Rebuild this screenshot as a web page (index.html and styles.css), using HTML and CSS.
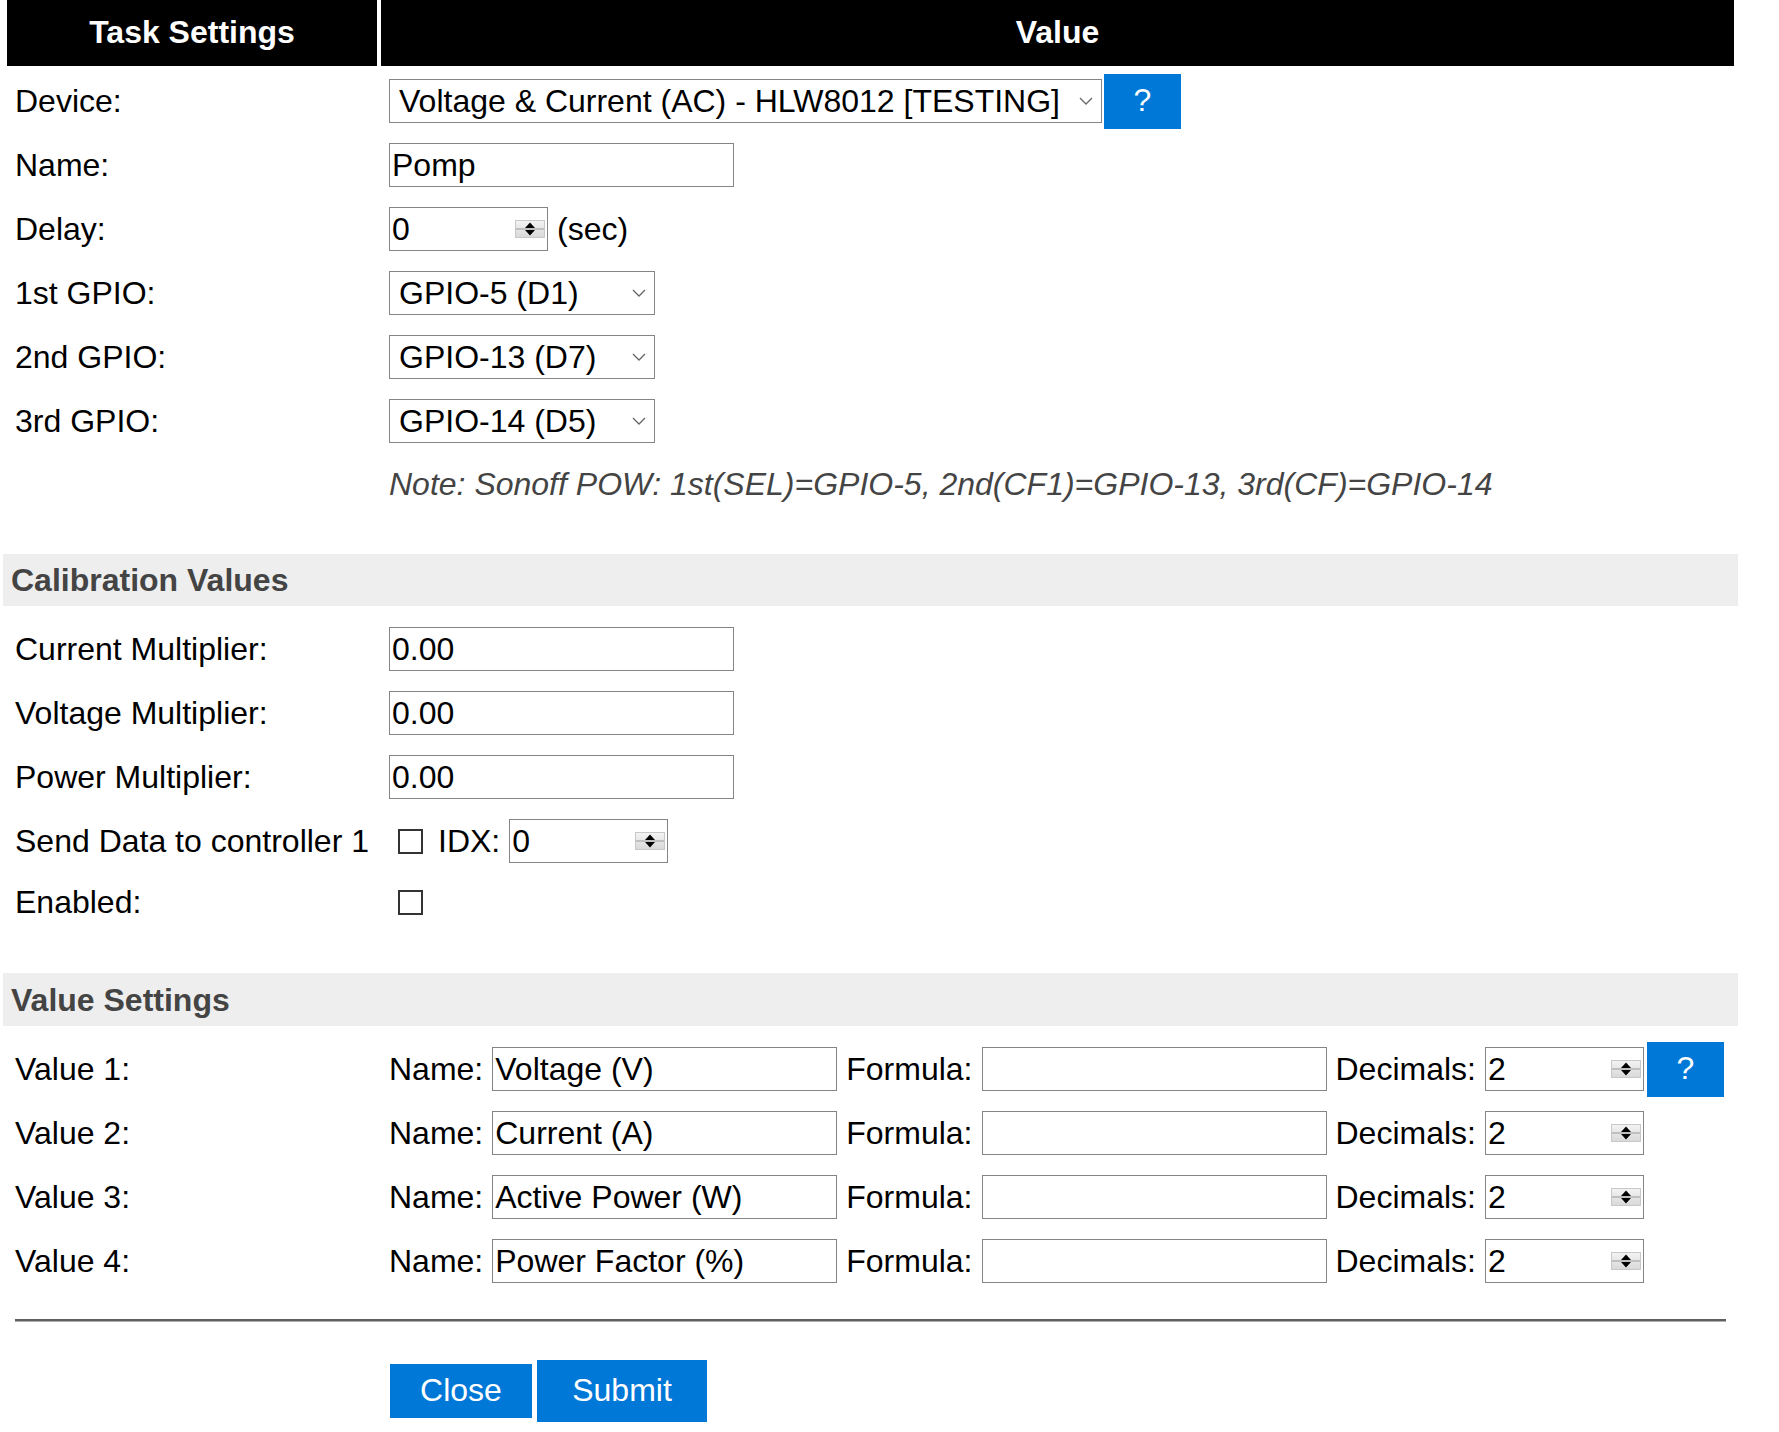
FILE: index.html
```html
<!DOCTYPE html>
<html lang="en">
<head>
<meta charset="utf-8">
<title>Task Settings</title>
<link rel="stylesheet" href="styles.css">
</head>
<body>
<form class="form">
  <div class="head">
    <div class="th">Task Settings</div>
    <div class="th">Value</div>
  </div>

  <div class="rows rows1">
    <div class="row">
      <div class="lbl">Device:</div>
      <div class="val gap2">
        <span class="sel w712"><select aria-label="Device"><option>Voltage &amp; Current (AC) - HLW8012 [TESTING]</option></select><svg class="chev" viewBox="0 0 14 8"><polyline points="1,1 7,7 13,1"/></svg></span>
        <button type="button" class="help">?</button>
      </div>
    </div>
    <div class="row">
      <div class="lbl">Name:</div>
      <div class="val"><input class="txt" value="Pomp" aria-label="Name"></div>
    </div>
    <div class="row">
      <div class="lbl">Delay:</div>
      <div class="val">
        <span class="num"><input value="0" aria-label="Delay"><svg class="spin" viewBox="0 0 30 18"><defs><linearGradient id="g" x1="0" y1="0" x2="0" y2="1"><stop offset="0" stop-color="#f4f4f4"/><stop offset="1" stop-color="#d8d8d8"/></linearGradient></defs><rect x="0.5" y="0.5" width="29" height="17" fill="url(#g)" stroke="#c8c8c8"/><line x1="1" y1="9" x2="29" y2="9" stroke="#999"/><polygon points="10,8 20,8 15,2.5"/><polygon points="10,10 20,10 15,15.5"/></svg></span>
        <span>(sec)</span>
      </div>
    </div>
    <div class="row">
      <div class="lbl">1st GPIO:</div>
      <div class="val"><span class="sel w266"><select aria-label="1st GPIO"><option>GPIO-5 (D1)</option></select><svg class="chev" viewBox="0 0 14 8"><polyline points="1,1 7,7 13,1"/></svg></span></div>
    </div>
    <div class="row">
      <div class="lbl">2nd GPIO:</div>
      <div class="val"><span class="sel w266"><select aria-label="2nd GPIO"><option>GPIO-13 (D7)</option></select><svg class="chev" viewBox="0 0 14 8"><polyline points="1,1 7,7 13,1"/></svg></span></div>
    </div>
    <div class="row">
      <div class="lbl">3rd GPIO:</div>
      <div class="val"><span class="sel w266"><select aria-label="3rd GPIO"><option>GPIO-14 (D5)</option></select><svg class="chev" viewBox="0 0 14 8"><polyline points="1,1 7,7 13,1"/></svg></span></div>
    </div>
    <div class="row">
      <div class="lbl"></div>
      <div class="val note">Note: Sonoff POW: 1st(SEL)=GPIO-5, 2nd(CF1)=GPIO-13, 3rd(CF)=GPIO-14</div>
    </div>
  </div>

  <h3 class="band band1">Calibration Values</h3>

  <div class="rows">
    <div class="row">
      <div class="lbl">Current Multiplier:</div>
      <div class="val"><input class="txt" value="0.00" aria-label="Current Multiplier"></div>
    </div>
    <div class="row">
      <div class="lbl">Voltage Multiplier:</div>
      <div class="val"><input class="txt" value="0.00" aria-label="Voltage Multiplier"></div>
    </div>
    <div class="row">
      <div class="lbl">Power Multiplier:</div>
      <div class="val"><input class="txt" value="0.00" aria-label="Power Multiplier"></div>
    </div>
    <div class="row">
      <div class="lbl">Send Data to controller 1</div>
      <div class="val">
        <input type="checkbox" class="chk" aria-label="Send Data to controller 1">
        <span>IDX:</span>
        <span class="num"><input value="0" aria-label="IDX"><svg class="spin" viewBox="0 0 30 18"><rect x="0.5" y="0.5" width="29" height="17" fill="url(#g)" stroke="#c8c8c8"/><line x1="1" y1="9" x2="29" y2="9" stroke="#999"/><polygon points="10,8 20,8 15,2.5"/><polygon points="10,10 20,10 15,15.5"/></svg></span>
      </div>
    </div>
    <div class="row row-short">
      <div class="lbl">Enabled:</div>
      <div class="val"><input type="checkbox" class="chk" aria-label="Enabled"></div>
    </div>
  </div>

  <h3 class="band band2">Value Settings</h3>

  <div class="rows">
    <div class="row">
      <div class="lbl">Value 1:</div>
      <div class="val">
        <span>Name:</span><input class="txt" value="Voltage (V)" aria-label="Value 1 name">
        <span>Formula:</span><input class="txt" value="" aria-label="Value 1 formula">
        <span>Decimals:</span>
        <span class="gap3">
          <span class="num"><input value="2" aria-label="Value 1 decimals"><svg class="spin" viewBox="0 0 30 18"><rect x="0.5" y="0.5" width="29" height="17" fill="url(#g)" stroke="#c8c8c8"/><line x1="1" y1="9" x2="29" y2="9" stroke="#999"/><polygon points="10,8 20,8 15,2.5"/><polygon points="10,10 20,10 15,15.5"/></svg></span>
          <button type="button" class="help">?</button>
        </span>
      </div>
    </div>
    <div class="row">
      <div class="lbl">Value 2:</div>
      <div class="val">
        <span>Name:</span><input class="txt" value="Current (A)" aria-label="Value 2 name">
        <span>Formula:</span><input class="txt" value="" aria-label="Value 2 formula">
        <span>Decimals:</span>
        <span class="num"><input value="2" aria-label="Value 2 decimals"><svg class="spin" viewBox="0 0 30 18"><rect x="0.5" y="0.5" width="29" height="17" fill="url(#g)" stroke="#c8c8c8"/><line x1="1" y1="9" x2="29" y2="9" stroke="#999"/><polygon points="10,8 20,8 15,2.5"/><polygon points="10,10 20,10 15,15.5"/></svg></span>
      </div>
    </div>
    <div class="row">
      <div class="lbl">Value 3:</div>
      <div class="val">
        <span>Name:</span><input class="txt" value="Active Power (W)" aria-label="Value 3 name">
        <span>Formula:</span><input class="txt" value="" aria-label="Value 3 formula">
        <span>Decimals:</span>
        <span class="num"><input value="2" aria-label="Value 3 decimals"><svg class="spin" viewBox="0 0 30 18"><rect x="0.5" y="0.5" width="29" height="17" fill="url(#g)" stroke="#c8c8c8"/><line x1="1" y1="9" x2="29" y2="9" stroke="#999"/><polygon points="10,8 20,8 15,2.5"/><polygon points="10,10 20,10 15,15.5"/></svg></span>
      </div>
    </div>
    <div class="row">
      <div class="lbl">Value 4:</div>
      <div class="val">
        <span>Name:</span><input class="txt" value="Power Factor (%)" aria-label="Value 4 name">
        <span>Formula:</span><input class="txt" value="" aria-label="Value 4 formula">
        <span>Decimals:</span>
        <span class="num"><input value="2" aria-label="Value 4 decimals"><svg class="spin" viewBox="0 0 30 18"><rect x="0.5" y="0.5" width="29" height="17" fill="url(#g)" stroke="#c8c8c8"/><line x1="1" y1="9" x2="29" y2="9" stroke="#999"/><polygon points="10,8 20,8 15,2.5"/><polygon points="10,10 20,10 15,15.5"/></svg></span>
      </div>
    </div>
  </div>

  <hr class="rule">

  <div class="actions">
    <a class="btn close" href="#">Close</a>
    <button type="button" class="btn submit">Submit</button>
  </div>
</form>
</body>
</html>
```

FILE: styles.css
```css
* {
  box-sizing: border-box;
}

html, body {
  margin: 0;
  padding: 0;
  background: #fff;
}

body {
  font-family: "Liberation Sans", Arial, sans-serif;
  font-size: 32px;
  color: #000;
}

.form {
  width: 1727px;
  margin: 0 0 0 7px;
}

.head,
.row {
  display: grid;
  grid-template-columns: 370px 1fr;
  column-gap: 4px;
}

.head {
  height: 66px;
}

.th {
  background: #000;
  color: #fff;
  font-weight: bold;
  display: flex;
  align-items: center;
  justify-content: center;
  padding-bottom: 2px;
}

.rows {
  display: flex;
  flex-direction: column;
  row-gap: 4px;
  padding-top: 4px;
}

.rows1 {
  padding-top: 5px;
}

.row {
  height: 60px;
}

.row-short {
  height: 54px;
}

.lbl {
  display: flex;
  align-items: center;
  padding-left: 8px;
  white-space: nowrap;
}

.val {
  display: flex;
  align-items: center;
  gap: 9px;
  padding-left: 8px;
  white-space: nowrap;
}

.val.gap2 {
  gap: 2px;
}

.gap3 {
  display: flex;
  align-items: center;
  gap: 3px;
}

.note {
  font-style: italic;
  color: #444;
  padding-bottom: 2px;
}

.txt {
  width: 345px;
  height: 44px;
  border: 1px solid #858585;
  font: inherit;
  color: #000;
  padding: 0 2px;
  margin: 0;
  background: #fff;
}

.sel {
  display: inline-flex;
  align-items: center;
  height: 44px;
  border: 1px solid #858585;
  padding-right: 8px;
  background: #fff;
}

.sel select {
  appearance: none;
  -webkit-appearance: none;
  border: 0;
  outline: none;
  background: transparent;
  font: inherit;
  color: #000;
  flex: 1;
  min-width: 0;
  height: 100%;
  padding: 0 0 0 9px;
  margin: 0;
}

.w712 {
  width: 713px;
}

.w266 {
  width: 266px;
}

.chev {
  width: 14px;
  height: 8px;
  flex: none;
  fill: none;
  stroke: #666;
  stroke-width: 1.3;
}

.num {
  display: inline-flex;
  align-items: center;
  width: 159px;
  height: 44px;
  border: 1px solid #858585;
  padding-right: 2px;
  background: #fff;
}

.num input {
  flex: 1;
  min-width: 0;
  height: 100%;
  border: 0;
  outline: none;
  background: transparent;
  font: inherit;
  color: #000;
  padding: 0 2px;
  margin: 0;
}

.spin {
  width: 30px;
  height: 18px;
  flex: none;
}

.chk {
  appearance: none;
  -webkit-appearance: none;
  width: 25px;
  height: 25px;
  border: 2px solid #333;
  border-radius: 0;
  background: #fff;
  margin: 0 6px 0 9px;
}

.help {
  width: 77px;
  height: 55px;
  border: 0;
  margin: 0;
  padding: 0 0 2px;
  background: #0078d7;
  color: #fff;
  font: inherit;
  cursor: pointer;
}

.band {
  margin: 0 -4px;
  background: #eee;
  color: #444;
  font-size: 32px;
  font-weight: bold;
  padding: 0 8px;
  height: 52px;
  line-height: 52px;
}

.band1 {
  margin-top: 39px;
  margin-bottom: 9px;
}

.band2 {
  margin-top: 44px;
  height: 53px;
  line-height: 55px;
  margin-bottom: 9px;
}

.rule {
  margin: 28px 8px 0 8px;
  height: 3px;
  border: 0;
  border-top: 2px solid #5f5f5f;
  border-bottom: 1px solid #b0b0b0;
}

.actions {
  display: flex;
  align-items: center;
  gap: 5px;
  margin-top: 38px;
  padding-left: 383px;
  height: 62px;
}

.btn {
  display: inline-flex;
  align-items: center;
  justify-content: center;
  background: #0078d7;
  color: #fff;
  font: inherit;
  text-decoration: none;
  border: 0;
  margin: 0;
  padding: 0 0 1px;
}

.close {
  width: 142px;
  height: 54px;
}

.submit {
  width: 170px;
  height: 62px;
}
```
